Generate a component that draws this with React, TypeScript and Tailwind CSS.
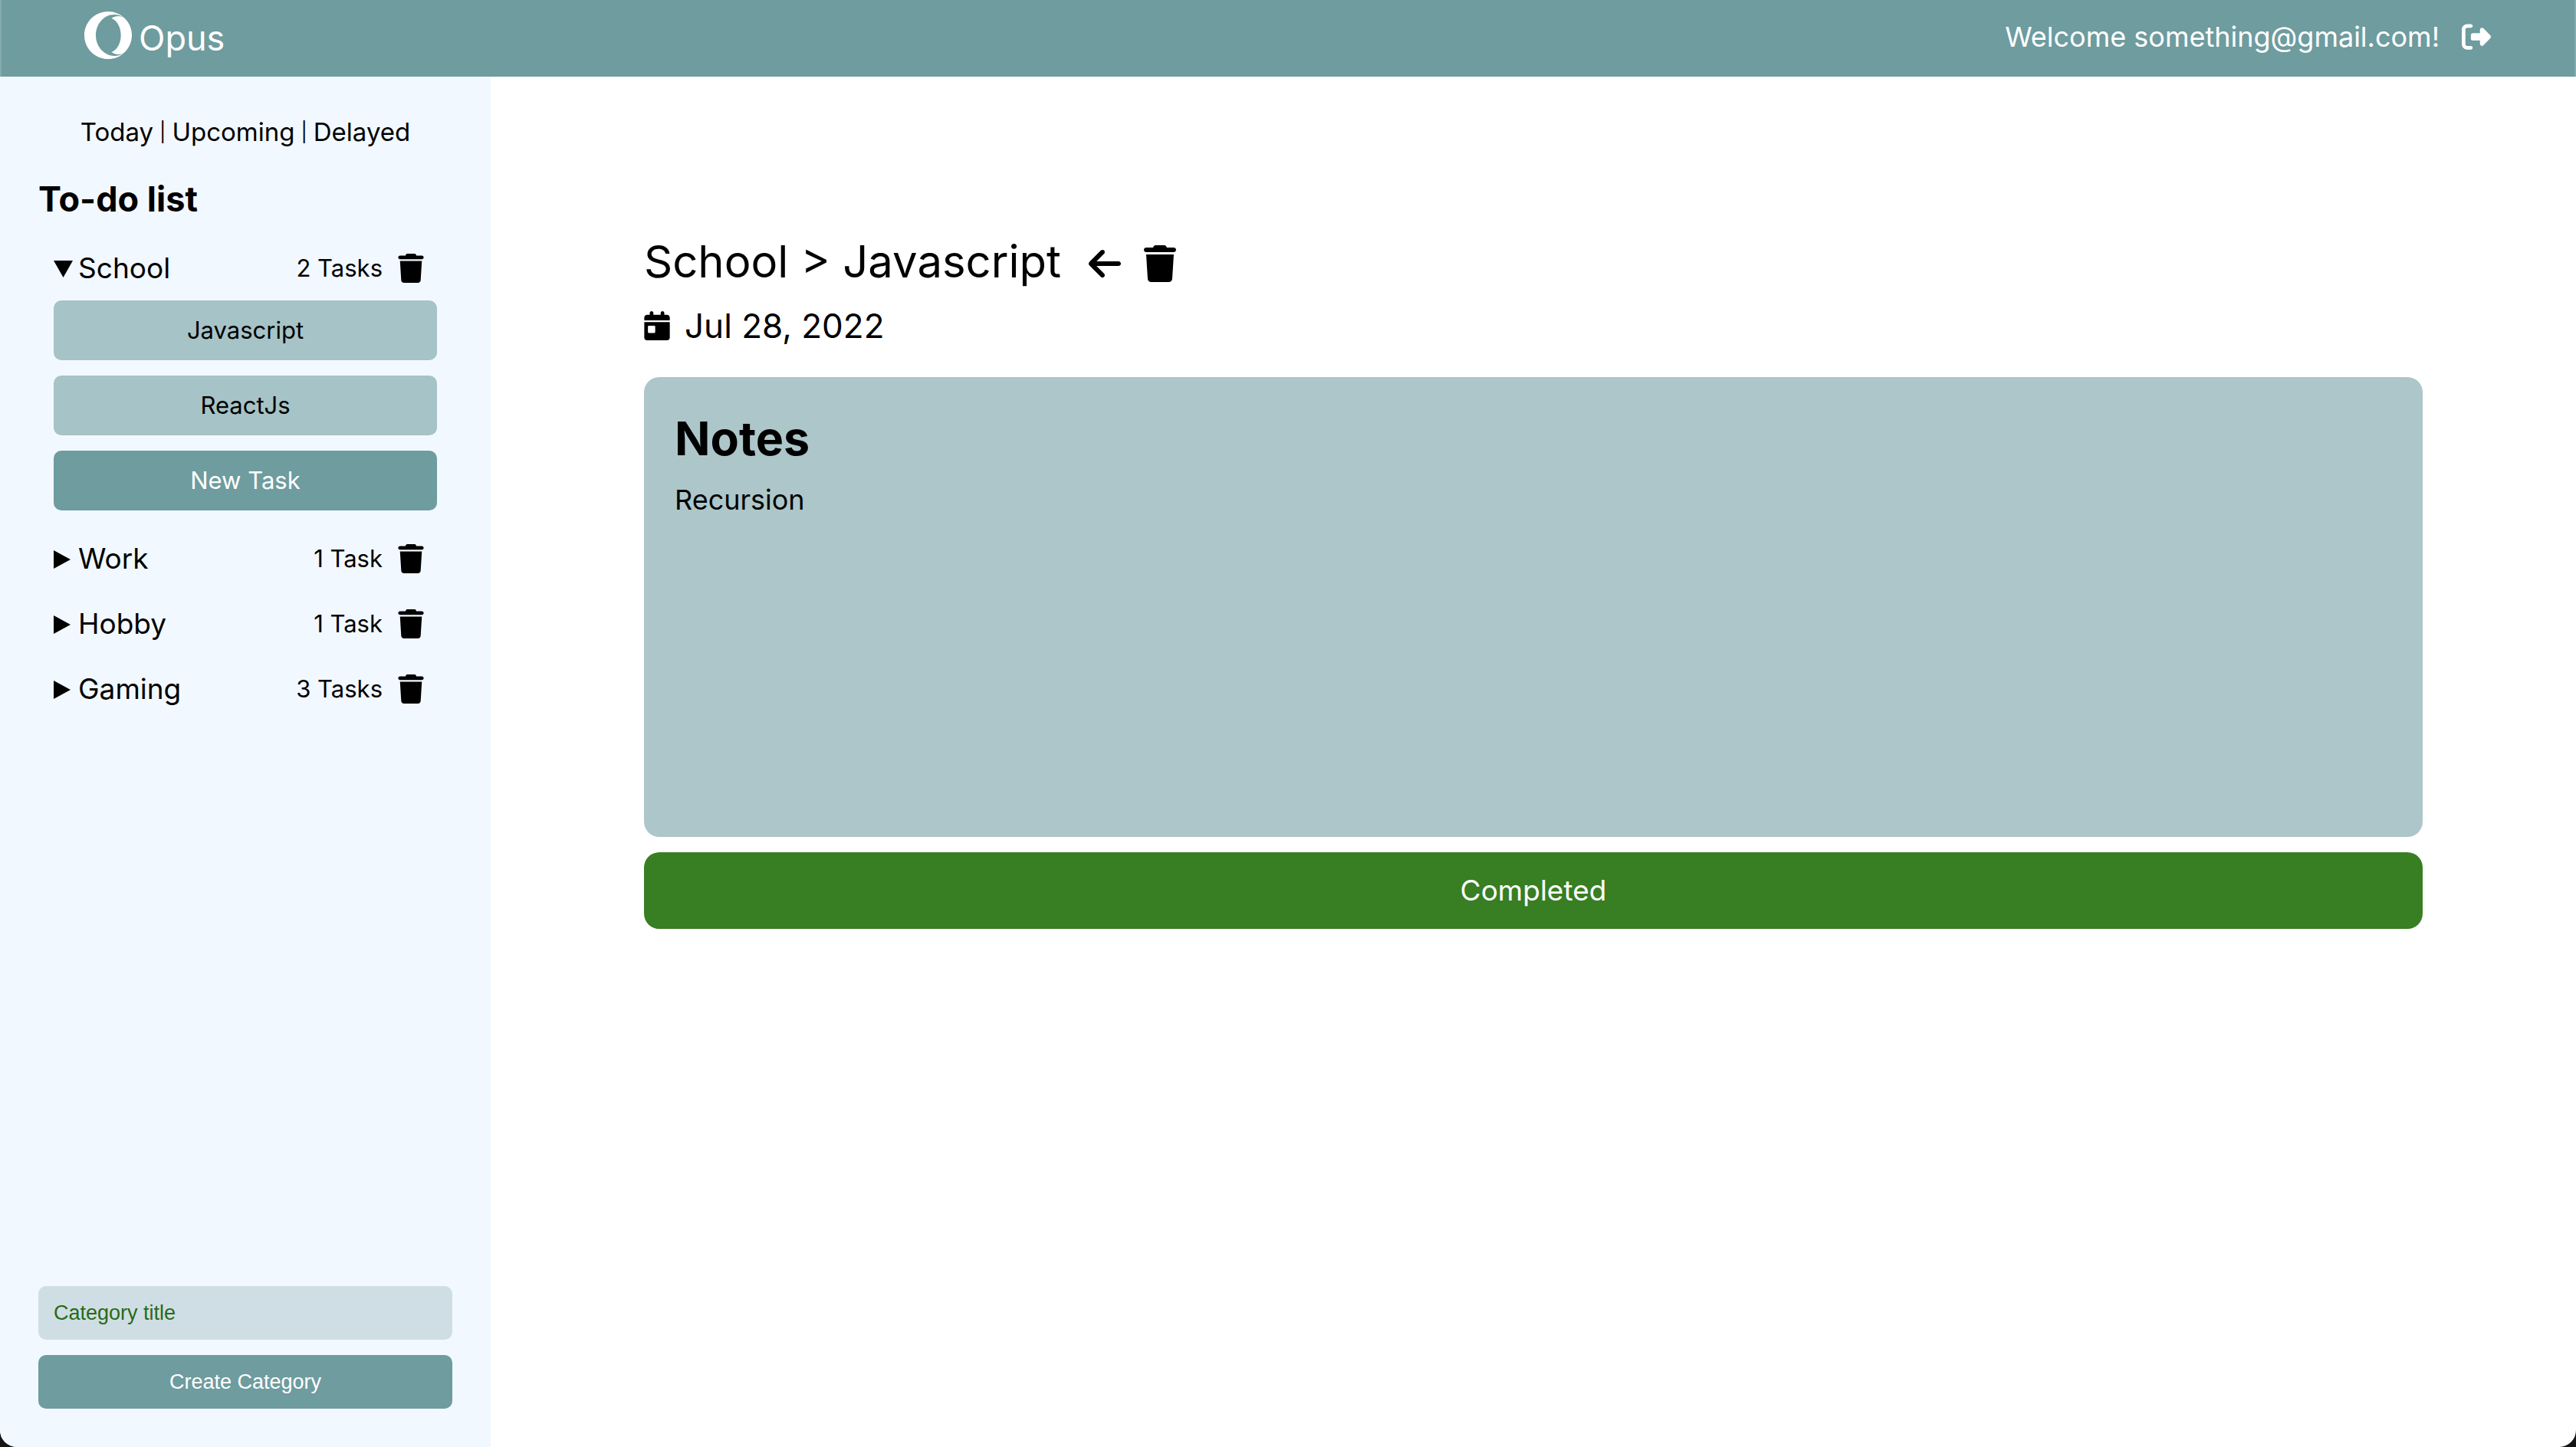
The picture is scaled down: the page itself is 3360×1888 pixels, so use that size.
import { useState } from 'react';
import { FaOpera } from 'react-icons/fa';
import { FaArrowLeft, FaCalendarDay, FaRightFromBracket, FaTrash } from 'react-icons/fa6';

type Category = { name: string; count: string; tasks: string[] };

const categories: Category[] = [
  { name: 'School', count: '2 Tasks', tasks: ['Javascript', 'ReactJs'] },
  { name: 'Work', count: '1 Task', tasks: ['Portfolio'] },
  { name: 'Hobby', count: '1 Task', tasks: ['Guitar'] },
  { name: 'Gaming', count: '3 Tasks', tasks: ['Chess', 'Tetris', 'Go'] },
];

function Marker({ open }: { open: boolean }) {
  return (
    <svg viewBox="0 0 26 26" className="h-[26px] w-[26px] shrink-0" aria-hidden="true">
      {open ? <path d="M0 3H25L12.500 25Z" /> : <path d="M0 2V26L22 14Z" />}
    </svg>
  );
}

function CategoryGroup({ category, initiallyOpen }: { category: Category; initiallyOpen: boolean }) {
  const [open, setOpen] = useState(initiallyOpen);
  return (
    <li>
      <div className="flex h-[45px] items-center gap-5 pr-[17px]">
        <button
          type="button"
          aria-expanded={open}
          onClick={() => setOpen(!open)}
          className="flex flex-1 items-center gap-[6px] text-left text-[37px] leading-[44px]"
        >
          <Marker open={open} />
          {category.name}
        </button>
        <span className="text-[31px] leading-[44px]">{category.count}</span>
        <button type="button" aria-label={`Delete ${category.name}`}>
          <FaTrash className="h-[38px] w-[34px]" />
        </button>
      </div>
      {open && (
        <div className="mt-5 flex flex-col gap-5">
          {category.tasks.map((task) => (
            <button key={task} type="button" className="h-[78px] rounded-[10px] bg-[#a6c3c7] text-[31px]">
              {task}
            </button>
          ))}
          <button type="button" className="h-[78px] rounded-[10px] bg-[#6e9c9f] text-[31px] text-white">
            New Task
          </button>
        </div>
      )}
    </li>
  );
}

export default function App() {
  return (
    <div className="bg-[#151513] font-[Inter,sans-serif] text-black">
      <div className="flex min-h-screen flex-col overflow-hidden rounded-b-[22px] bg-white">
        <header className="flex h-[100px] items-center justify-between border-x-2 border-[#84abae] bg-[#6e9c9f] pr-[109px] pl-[107px] text-white">
          <a href="#home" className="flex items-start gap-2 text-[45px] leading-[70px]">
            <FaOpera className="size-16" />
            Opus
          </a>
          <div className="flex items-center gap-[29px] pb-1 text-[36px]">
            <span>Welcome something@gmail.com!</span>
            <button type="button" aria-label="Log out">
              <FaRightFromBracket className="size-[38px]" />
            </button>
          </div>
        </header>

        <div className="flex flex-1">
          <aside className="flex w-[640px] shrink-0 flex-col bg-[#f2f8ff] p-[50px]">
            <nav className="flex items-center justify-center gap-2 text-[33px] leading-[44px]">
              <a href="#today">Today</a>
              <span className="text-[25px]">|</span>
              <a href="#upcoming">Upcoming</a>
              <span className="text-[25px]">|</span>
              <a href="#delayed">Delayed</a>
            </nav>
            <h2 className="mt-9 text-[45px] leading-[60px] font-bold">To-do list</h2>
            <ul className="mt-[37px] flex flex-col gap-10 px-5">
              {categories.map((category, i) => (
                <CategoryGroup key={category.name} category={category} initiallyOpen={i === 0} />
              ))}
            </ul>
            <form
              className="mt-auto flex flex-col gap-5 font-[Liberation_Sans,Arial,sans-serif] text-[27px]"
              onSubmit={(e) => e.preventDefault()}
            >
              <input
                type="text"
                aria-label="Category title"
                placeholder="Category title"
                className="h-[70px] rounded-[10px] bg-[#cedee4] px-5 placeholder:text-[#2a6a15]"
              />
              <button type="submit" className="h-[70px] rounded-[10px] bg-[#6e9c9f] text-white">
                Create Category
              </button>
            </form>
          </aside>

          <main className="flex min-w-0 flex-1 flex-col px-[200px] pt-[206px] pb-[50px]">
            <div className="flex items-start">
              <h1 className="text-[58px] leading-[70px]">School &gt; Javascript</h1>
              <div className="ml-9 flex gap-[30px] pt-[14px]">
                <button type="button" aria-label="Back">
                  <FaArrowLeft className="h-12 w-[42px]" />
                </button>
                <button type="button" aria-label="Delete task">
                  <FaTrash className="h-12 w-[42px]" />
                </button>
              </div>
            </div>
            <p className="mt-[22px] flex items-center gap-[19px] text-[44px] leading-[54px]">
              <FaCalendarDay className="h-[38px] w-[34px]" />
              Jul 28, 2022
            </p>
            <section className="mt-10 min-h-[600px] rounded-[20px] bg-[#adc6c9] p-10">
              <h2 className="text-[61px] leading-[80px] font-bold">Notes</h2>
              <p className="mt-[18px] text-[36px] leading-[44px]">Recursion</p>
            </section>
            <button type="button" className="mt-5 h-[100px] rounded-[20px] bg-[#387e22] text-[37px] text-white">
              Completed
            </button>
          </main>
        </div>
      </div>
    </div>
  );
}
